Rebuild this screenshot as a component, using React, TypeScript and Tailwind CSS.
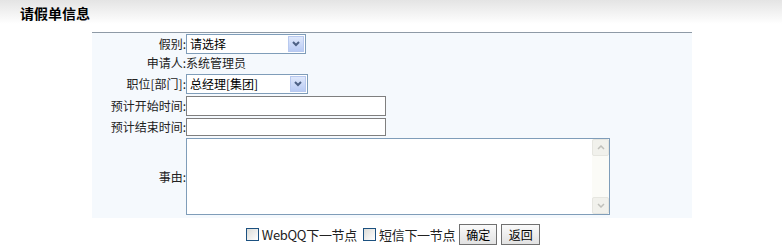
import React from "react";

const font = { fontFamily: '"SimSun", "Noto Sans CJK SC", sans-serif' };

function FakeSelect({ value, width }: { value: string; width: string }) {
  return (
    <div className={`flex h-[20px] items-center border border-[#7f9db9] bg-white ${width}`}>
      <span className="flex-1 pl-[3px] text-[12px] leading-none text-black">{value}</span>
      <span className="mr-px flex h-[16px] w-[16px] items-center justify-center border border-[#b8c9ef] bg-gradient-to-b from-[#dfe8fb] to-[#b9cbf4]">
        <svg width="8" height="6" viewBox="0 0 8 6">
          <path d="M1 1 L4 4 L7 1" stroke="#4d6185" strokeWidth="2" fill="none" />
        </svg>
      </span>
    </div>
  );
}

function Row({ label, children, className = "" }: { label: string; children: React.ReactNode; className?: string }) {
  return (
    <div className={`flex items-center ${className}`}>
      <div className="w-[94px] shrink-0 text-right text-[12px] text-[#222]">{label}</div>
      <div className="flex items-center">{children}</div>
    </div>
  );
}

export default function App() {
  return (
    <div className="h-[249px] w-[782px] bg-white text-[12px]" style={font}>
      <div className="h-[24px] bg-gradient-to-b from-[#e4e4e4] to-white pl-[20px] pt-[3px] text-[14px] font-bold text-black">
        请假单信息
      </div>
      <div className="mx-[92px] mt-[8px] w-[600px] border-t border-[#8e9aa6] bg-[#f5f9fd] pb-[2px]">
        <Row label="假别:" className="h-[21px]">
          <FakeSelect value="请选择" width="w-[120px]" />
        </Row>
        <Row label="申请人:" className="h-[18px]">
          <span className="text-[12px] text-[#222]">系统管理员</span>
        </Row>
        <Row label="职位[部门]:" className="h-[23px]">
          <FakeSelect value="总经理[集团]" width="w-[122px]" />
        </Row>
        <Row label="预计开始时间:" className="h-[22px]">
          <div className="h-[20px] w-[200px] border border-[#7f7f7f] bg-white" />
        </Row>
        <Row label="预计结束时间:" className="h-[20px]">
          <div className="h-[18px] w-[200px] border border-[#7f7f7f] bg-white" />
        </Row>
        <Row label="事由:" className="h-[79px]">
          <div className="flex h-[77px] w-[424px] justify-end border border-[#7f9db9] bg-white">
            <div className="flex w-[17px] flex-col justify-between bg-[#fbfbf7]">
              <div className="flex h-[17px] items-center justify-center rounded-[2px] border border-[#e6e6e0] bg-[#f1f1ec]">
                <svg width="8" height="5" viewBox="0 0 8 5">
                  <path d="M1 4 L4 1 L7 4" stroke="#c0c0bb" strokeWidth="1.5" fill="none" />
                </svg>
              </div>
              <div className="flex h-[17px] items-center justify-center rounded-[2px] border border-[#e6e6e0] bg-[#f1f1ec]">
                <svg width="8" height="5" viewBox="0 0 8 5">
                  <path d="M1 1 L4 4 L7 1" stroke="#c0c0bb" strokeWidth="1.5" fill="none" />
                </svg>
              </div>
            </div>
          </div>
        </Row>
      </div>
      <div className="mt-[6px] flex items-center justify-center pl-[4px] text-[12px] text-[#222]">
        <span className="mr-[3px] inline-block h-[13px] w-[13px] border border-[#1c5180] bg-gradient-to-br from-[#dcdcd7] to-white" />
        <span className="mr-[6px] text-[13px] tracking-[-0.3px]">WebQQ下一节点</span>
        <span className="mr-[3px] inline-block h-[13px] w-[13px] border border-[#1c5180] bg-gradient-to-br from-[#dcdcd7] to-white" />
        <span className="mr-[4px] text-[13px] tracking-[-0.3px]">短信下一节点</span>
        <button className="mr-[4px] h-[21px] w-[38px] border border-[#707070] bg-gradient-to-b from-[#fafafa] to-[#e2e2e2] text-[12px] text-black">
          确定
        </button>
        <button className="h-[21px] w-[39px] border border-[#707070] bg-gradient-to-b from-[#fafafa] to-[#e2e2e2] text-[12px] text-black">
          返回
        </button>
      </div>
    </div>
  );
}
